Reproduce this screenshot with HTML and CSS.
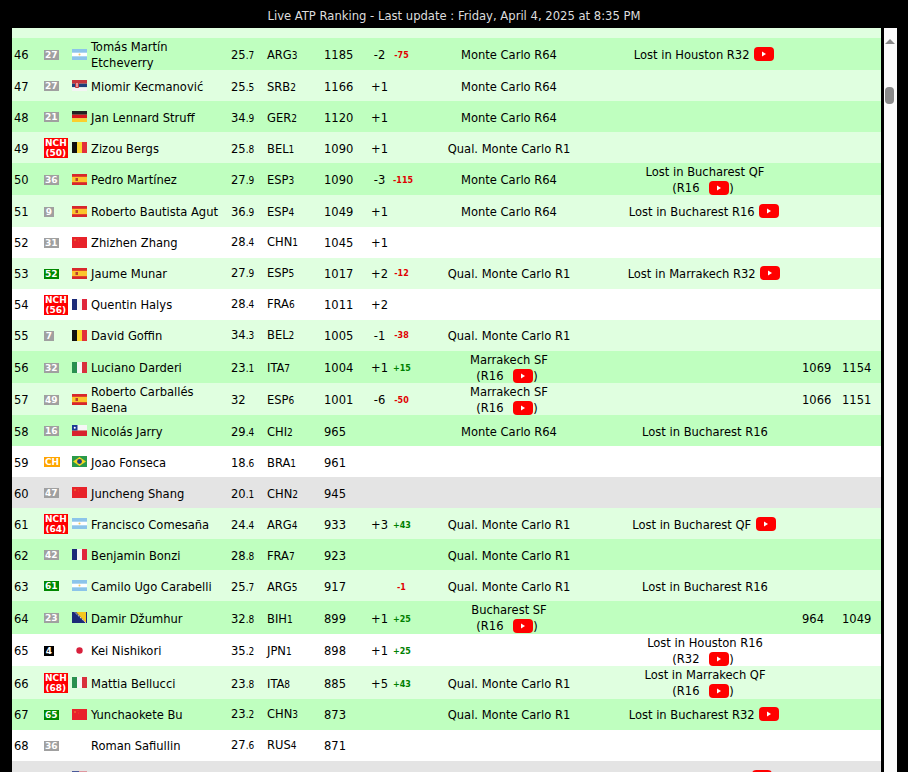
FILE: index.html
```html
<!DOCTYPE html>
<html lang="en">
<head>
<meta charset="utf-8">
<title>Live ATP Ranking</title>
<link rel="stylesheet" href="styles.css">
</head>
<body>
<svg class="defs" width="0" height="0" aria-hidden="true">
<symbol id="yt" viewBox="0 0 20 14"><rect width="20" height="14" rx="4" fill="#f00"/><path d="M8 4.5v5l4-2.5z" fill="#fff"/></symbol>
<symbol id="arg" viewBox="0 0 15 11"><rect width="15" height="11" fill="#fff"/><rect width="15" height="3.7" fill="#8cc4ea"/><rect y="7.3" width="15" height="3.7" fill="#8cc4ea"/><circle cx="7.5" cy="5.5" r="1" fill="#f0c860"/></symbol>
<symbol id="srb" viewBox="0 0 15 11"><rect width="15" height="3.7" fill="#c6363c"/><rect y="3.7" width="15" height="3.6" fill="#1f3f7a"/><rect y="7.3" width="15" height="3.7" fill="#f4f4f4"/><rect x="3" y="2" width="4" height="6" rx="1" fill="#c6363c"/><rect x="4.5" y="3" width="1" height="4" fill="#fff"/></symbol>
<symbol id="ger" viewBox="0 0 15 11"><rect width="15" height="3.7" fill="#222"/><rect y="3.7" width="15" height="3.6" fill="#d8161e"/><rect y="7.3" width="15" height="3.7" fill="#fbcf2c"/></symbol>
<symbol id="bel" viewBox="0 0 15 11"><rect width="5" height="11" fill="#111"/><rect x="5" width="5" height="11" fill="#fbd930"/><rect x="10" width="5" height="11" fill="#e2303a"/></symbol>
<symbol id="esp" viewBox="0 0 15 11"><rect width="15" height="11" fill="#d8262c"/><rect y="2.8" width="15" height="5.4" fill="#fbc52c"/><rect x="3.5" y="4" width="2.5" height="3" fill="#b8402c"/></symbol>
<symbol id="chn" viewBox="0 0 15 11"><rect width="15" height="11" fill="#e8222a"/><circle cx="3" cy="3" r="1" fill="#ee6a30"/><circle cx="6" cy="1.5" r=".4" fill="#ee6a30"/><circle cx="6.5" cy="4" r=".4" fill="#ee6a30"/></symbol>
<symbol id="fra" viewBox="0 0 15 11"><rect width="5" height="11" fill="#1c2a78"/><rect x="5" width="5" height="11" fill="#f6f6f6"/><rect x="10" width="5" height="11" fill="#e0263c"/></symbol>
<symbol id="ita" viewBox="0 0 15 11"><rect width="5" height="11" fill="#2a9050"/><rect x="5" width="5" height="11" fill="#f6f6f6"/><rect x="10" width="5" height="11" fill="#d8303c"/></symbol>
<symbol id="chi" viewBox="0 0 15 11"><rect width="15" height="5.5" fill="#f6f6f6"/><rect y="5.5" width="15" height="5.5" fill="#d8222c"/><rect width="5.5" height="5.5" fill="#1c3a94"/><circle cx="2.75" cy="2.75" r="1" fill="#fff"/></symbol>
<symbol id="bra" viewBox="0 0 15 11"><rect width="15" height="11" fill="#2a9a4a"/><path d="M7.5 1 14 5.5 7.5 10 1 5.5z" fill="#f4d820"/><circle cx="7.5" cy="5.5" r="2.4" fill="#203c80"/></symbol>
<symbol id="bih" viewBox="0 0 15 11"><rect width="15" height="11" fill="#1c2a78"/><path d="M4 0h10v11z" fill="#f4c820"/><path d="M2.5 0 14 11" stroke="#f4f4f4" stroke-width="1" stroke-dasharray="1.5 1"/></symbol>
<symbol id="jpn" viewBox="0 0 15 11"><circle cx="7.5" cy="5.5" r="3.2" fill="#d8203c"/></symbol>
<symbol id="usa" viewBox="0 0 15 11"><rect width="15" height="11" fill="#f0f0f0"/><path d="M0 1h15M0 3.5h15M0 6h15M0 8.5h15" stroke="#d04050" stroke-width="1.2"/><rect width="7" height="6" fill="#4a5a9a"/></symbol>
</svg>
<header class="top">Live ATP Ranking - Last update : Friday, April 4, 2025 at 8:35 PM</header>
<div class="frame">
  <main class="scroller">
    <table class="rank">
      <colgroup>
        <col class="c-rank"><col class="c-badge"><col class="c-flag"><col class="c-name"><col class="c-age"><col class="c-ctry"><col class="c-pts"><col class="c-chg"><col class="c-delta"><col class="c-next"><col class="c-last"><col class="c-l1"><col class="c-l2">
      </colgroup>
      <tbody>
        <tr class="spacer light"><td colspan="13"></td></tr>
        <tr class="med h32 lo"><td class="pl">46</td><td class="pl"><span class="bd gray">27</span></td><td class="pl"><svg class="flag"><use href="#arg"/></svg></td><td class="pl two"><div class="shift">Tomás Martín Etcheverry</div></td><td class="pl">25<small>.7</small></td><td class="pl">ARG<small>3</small></td><td class="pl">1185</td><td class="ct">-2</td><td class="ct"><span class="dn">-75</span></td><td class="ct">Monte Carlo R64</td><td class="ct">Lost in Houston R32 <svg class="yt"><use href="#yt"/></svg></td><td></td><td></td></tr>
        <tr class="light lo"><td class="pl">47</td><td class="pl"><span class="bd gray">27</span></td><td class="pl"><svg class="flag"><use href="#srb"/></svg></td><td class="pl">Miomir Kecmanović</td><td class="pl">25<small>.5</small></td><td class="pl">SRB<small>2</small></td><td class="pl">1166</td><td class="ct">+1</td><td class="ct"></td><td class="ct">Monte Carlo R64</td><td></td><td></td><td></td></tr>
        <tr class="med lo"><td class="pl">48</td><td class="pl"><span class="bd gray">21</span></td><td class="pl"><svg class="flag"><use href="#ger"/></svg></td><td class="pl">Jan Lennard Struff</td><td class="pl">34<small>.9</small></td><td class="pl">GER<small>2</small></td><td class="pl">1120</td><td class="ct">+1</td><td class="ct"></td><td class="ct">Monte Carlo R64</td><td></td><td></td><td></td></tr>
        <tr class="light lo"><td class="pl">49</td><td class="pl"><span class="bd red">NCH<br>(50)</span></td><td class="pl"><svg class="flag"><use href="#bel"/></svg></td><td class="pl">Zizou Bergs</td><td class="pl">25<small>.8</small></td><td class="pl">BEL<small>1</small></td><td class="pl">1090</td><td class="ct">+1</td><td class="ct"></td><td class="ct">Qual. Monte Carlo R1</td><td></td><td></td><td></td></tr>
        <tr class="med h32 lo"><td class="pl">50</td><td class="pl"><span class="bd gray">36</span></td><td class="pl"><svg class="flag"><use href="#esp"/></svg></td><td class="pl">Pedro Martínez</td><td class="pl">27<small>.9</small></td><td class="pl">ESP<small>3</small></td><td class="pl">1090</td><td class="ct">-3</td><td class="ct"><span class="dn">-115</span></td><td class="ct">Monte Carlo R64</td><td class="ct two"><div class="shift">Lost in Bucharest QF<br>(R16 <svg class="yt"><use href="#yt"/></svg><span class="pr">)</span></div></td><td></td><td></td></tr>
        <tr class="light h32 lo"><td class="pl">51</td><td class="pl"><span class="bd gray">9</span></td><td class="pl"><svg class="flag"><use href="#esp"/></svg></td><td class="pl">Roberto Bautista Agut</td><td class="pl">36<small>.9</small></td><td class="pl">ESP<small>4</small></td><td class="pl">1049</td><td class="ct">+1</td><td class="ct"></td><td class="ct">Monte Carlo R64</td><td class="ct">Lost in Bucharest R16 <svg class="yt"><use href="#yt"/></svg></td><td></td><td></td></tr>
        <tr class="white"><td class="pl">52</td><td class="pl"><span class="bd gray">31</span></td><td class="pl"><svg class="flag"><use href="#chn"/></svg></td><td class="pl">Zhizhen Zhang</td><td class="pl">28<small>.4</small></td><td class="pl">CHN<small>1</small></td><td class="pl">1045</td><td class="ct">+1</td><td class="ct"></td><td class="ct"></td><td></td><td></td><td></td></tr>
        <tr class="light"><td class="pl">53</td><td class="pl"><span class="bd green">52</span></td><td class="pl"><svg class="flag"><use href="#esp"/></svg></td><td class="pl">Jaume Munar</td><td class="pl">27<small>.9</small></td><td class="pl">ESP<small>5</small></td><td class="pl">1017</td><td class="ct">+2</td><td class="ct"><span class="dn">-12</span></td><td class="ct">Qual. Monte Carlo R1</td><td class="ct">Lost in Marrakech R32 <svg class="yt"><use href="#yt"/></svg></td><td></td><td></td></tr>
        <tr class="white"><td class="pl">54</td><td class="pl"><span class="bd red">NCH<br>(56)</span></td><td class="pl"><svg class="flag"><use href="#fra"/></svg></td><td class="pl">Quentin Halys</td><td class="pl">28<small>.4</small></td><td class="pl">FRA<small>6</small></td><td class="pl">1011</td><td class="ct">+2</td><td class="ct"></td><td class="ct"></td><td></td><td></td><td></td></tr>
        <tr class="light"><td class="pl">55</td><td class="pl"><span class="bd gray">7</span></td><td class="pl"><svg class="flag"><use href="#bel"/></svg></td><td class="pl">David Goffin</td><td class="pl">34<small>.3</small></td><td class="pl">BEL<small>2</small></td><td class="pl">1005</td><td class="ct">-1</td><td class="ct"><span class="dn">-38</span></td><td class="ct">Qual. Monte Carlo R1</td><td></td><td></td><td></td></tr>
        <tr class="med h32 lo"><td class="pl">56</td><td class="pl"><span class="bd gray">32</span></td><td class="pl"><svg class="flag"><use href="#ita"/></svg></td><td class="pl">Luciano Darderi</td><td class="pl">23<small>.1</small></td><td class="pl">ITA<small>7</small></td><td class="pl">1004</td><td class="ct">+1</td><td class="ct"><span class="up">+15</span></td><td class="ct two"><div class="shift">Marrakech SF<br>(R16 <svg class="yt"><use href="#yt"/></svg><span class="pr">)</span></div></td><td></td><td>1069</td><td>1154</td></tr>
        <tr class="light h32 lo"><td class="pl">57</td><td class="pl"><span class="bd gray">49</span></td><td class="pl"><svg class="flag"><use href="#esp"/></svg></td><td class="pl two"><div class="shift">Roberto Carballés Baena</div></td><td class="pl">32</td><td class="pl">ESP<small>6</small></td><td class="pl">1001</td><td class="ct">-6</td><td class="ct"><span class="dn">-50</span></td><td class="ct two"><div class="shift">Marrakech SF<br>(R16 <svg class="yt"><use href="#yt"/></svg><span class="pr">)</span></div></td><td></td><td>1066</td><td>1151</td></tr>
        <tr class="med lo"><td class="pl">58</td><td class="pl"><span class="bd gray">16</span></td><td class="pl"><svg class="flag"><use href="#chi"/></svg></td><td class="pl">Nicolás Jarry</td><td class="pl">29<small>.4</small></td><td class="pl">CHI<small>2</small></td><td class="pl">965</td><td class="ct"></td><td class="ct"></td><td class="ct">Monte Carlo R64</td><td class="ct">Lost in Bucharest R16</td><td></td><td></td></tr>
        <tr class="white lo"><td class="pl">59</td><td class="pl"><span class="bd orange">CH</span></td><td class="pl"><svg class="flag"><use href="#bra"/></svg></td><td class="pl">Joao Fonseca</td><td class="pl">18<small>.6</small></td><td class="pl">BRA<small>1</small></td><td class="pl">961</td><td class="ct"></td><td class="ct"></td><td class="ct"></td><td></td><td></td><td></td></tr>
        <tr class="grey lo"><td class="pl">60</td><td class="pl"><span class="bd gray">47</span></td><td class="pl"><svg class="flag"><use href="#chn"/></svg></td><td class="pl">Juncheng Shang</td><td class="pl">20<small>.1</small></td><td class="pl">CHN<small>2</small></td><td class="pl">945</td><td class="ct"></td><td class="ct"></td><td class="ct"></td><td></td><td></td><td></td></tr>
        <tr class="light lo"><td class="pl">61</td><td class="pl"><span class="bd red">NCH<br>(64)</span></td><td class="pl"><svg class="flag"><use href="#arg"/></svg></td><td class="pl">Francisco Comesaña</td><td class="pl">24<small>.4</small></td><td class="pl">ARG<small>4</small></td><td class="pl">933</td><td class="ct">+3</td><td class="ct"><span class="up">+43</span></td><td class="ct">Qual. Monte Carlo R1</td><td class="ct">Lost in Bucharest QF <svg class="yt"><use href="#yt"/></svg></td><td></td><td></td></tr>
        <tr class="med lo"><td class="pl">62</td><td class="pl"><span class="bd gray">42</span></td><td class="pl"><svg class="flag"><use href="#fra"/></svg></td><td class="pl">Benjamin Bonzi</td><td class="pl">28<small>.8</small></td><td class="pl">FRA<small>7</small></td><td class="pl">923</td><td class="ct"></td><td class="ct"></td><td class="ct">Qual. Monte Carlo R1</td><td></td><td></td><td></td></tr>
        <tr class="light lo"><td class="pl">63</td><td class="pl"><span class="bd green">61</span></td><td class="pl"><svg class="flag"><use href="#arg"/></svg></td><td class="pl">Camilo Ugo Carabelli</td><td class="pl">25<small>.7</small></td><td class="pl">ARG<small>5</small></td><td class="pl">917</td><td class="ct"></td><td class="ct"><span class="dn">-1</span></td><td class="ct">Qual. Monte Carlo R1</td><td class="ct">Lost in Bucharest R16</td><td></td><td></td></tr>
        <tr class="med h33 lo2"><td class="pl">64</td><td class="pl"><span class="bd gray">23</span></td><td class="pl"><svg class="flag"><use href="#bih"/></svg></td><td class="pl">Damir Džumhur</td><td class="pl">32<small>.8</small></td><td class="pl">BIH<small>1</small></td><td class="pl">899</td><td class="ct">+1</td><td class="ct"><span class="up">+25</span></td><td class="ct two"><div class="shift">Bucharest SF<br>(R16 <svg class="yt"><use href="#yt"/></svg><span class="pr">)</span></div></td><td></td><td>964</td><td>1049</td></tr>
        <tr class="white h32 lo"><td class="pl">65</td><td class="pl"><span class="bd black">4</span></td><td class="pl"><svg class="flag"><use href="#jpn"/></svg></td><td class="pl">Kei Nishikori</td><td class="pl">35<small>.2</small></td><td class="pl">JPN<small>1</small></td><td class="pl">898</td><td class="ct">+1</td><td class="ct"><span class="up">+25</span></td><td class="ct"></td><td class="ct two"><div class="shift">Lost in Houston R16<br>(R32 <svg class="yt"><use href="#yt"/></svg><span class="pr">)</span></div></td><td></td><td></td></tr>
        <tr class="light h33 lo2"><td class="pl">66</td><td class="pl"><span class="bd red">NCH<br>(68)</span></td><td class="pl"><svg class="flag"><use href="#ita"/></svg></td><td class="pl">Mattia Bellucci</td><td class="pl">23<small>.8</small></td><td class="pl">ITA<small>8</small></td><td class="pl">885</td><td class="ct">+5</td><td class="ct"><span class="up">+43</span></td><td class="ct">Qual. Monte Carlo R1</td><td class="ct two"><div class="shift">Lost in Marrakech QF<br>(R16 <svg class="yt"><use href="#yt"/></svg><span class="pr">)</span></div></td><td></td><td></td></tr>
        <tr class="med"><td class="pl">67</td><td class="pl"><span class="bd green">65</span></td><td class="pl"><svg class="flag"><use href="#chn"/></svg></td><td class="pl">Yunchaokete Bu</td><td class="pl">23<small>.2</small></td><td class="pl">CHN<small>3</small></td><td class="pl">873</td><td class="ct"></td><td class="ct"></td><td class="ct">Qual. Monte Carlo R1</td><td class="ct">Lost in Bucharest R32 <svg class="yt"><use href="#yt"/></svg></td><td></td><td></td></tr>
        <tr class="white"><td class="pl">68</td><td class="pl"><span class="bd gray">36</span></td><td class="pl"></td><td class="pl">Roman Safiullin</td><td class="pl">27<small>.6</small></td><td class="pl">RUS<small>4</small></td><td class="pl">871</td><td class="ct"></td><td class="ct"></td><td class="ct"></td><td></td><td></td><td></td></tr>
        <tr class="grey"><td class="pl"></td><td class="pl"><span class="bd green empty"></span></td><td class="pl"><svg class="flag"><use href="#usa"/></svg></td><td class="pl"></td><td class="pl"></td><td class="pl"></td><td class="pl"></td><td class="ct"></td><td class="ct"></td><td class="ct"></td><td class="ct"><svg class="yt yt-last"><use href="#yt"/></svg></td><td></td><td></td></tr>
      </tbody>
    </table>
  </main>
  <aside class="scrollbar" aria-hidden="true"><span class="arrow"></span><span class="thumb"></span></aside>
</div>
</body>
</html>
```
FILE: styles.css
```css
html, body {
  margin: 0;
  height: 100%;
  background: #000;
  overflow: hidden;
}
body {
  font-family: "DejaVu Sans Condensed", "DejaVu Sans", sans-serif;
  font-size: 12.8px;
  line-height: 16px;
  color: #000;
}
.defs { position: absolute; }
.top {
  height: 20px;
  padding-top: 8px;
  text-align: center;
  color: #ddd;
  font-size: 12.9px;
}
.frame {
  display: flex;
  height: 744px;
  padding-left: 12px;
}
.scroller {
  width: 869px;
  height: 744px;
  overflow: hidden;
  flex: none;
}
.scrollbar {
  display: flex;
  flex-direction: column;
  align-items: flex-start;
  flex: none;
  box-sizing: border-box;
  width: 13px;
  margin-left: 3px;
  padding: 11px 0 0 1px;
  background: #fbfbfb;
}
.arrow {
  width: 0;
  height: 0;
  border-left: 5px solid transparent;
  border-right: 5px solid transparent;
  border-bottom: 5px solid #8a8a8a;
}
.thumb {
  width: 9px;
  height: 17px;
  margin-top: 43px;
  border-radius: 4px;
  background: #8a8a8a;
}
.rank {
  width: 869px;
  table-layout: fixed;
  border-collapse: collapse;
}
.rank td { padding: 0; vertical-align: middle; }
.rank tr { height: 31px; }
.rank tr.h32 { height: 32px; }
.rank tr.h33 { height: 33px; }
.rank tr.spacer { height: 10px; }
.rank .lo td:nth-child(n+4),
.rank .lo2 td:nth-child(n+4) { vertical-align: top; }
.rank .lo td:nth-child(n+4) { padding-top: 9px; }
.rank .lo2 td:nth-child(n+4) { padding-top: 10px; }
.rank tr td.two:nth-child(n+4) { padding-top: 0; }
.shift { margin: 1px 0 -1px; }
.rank .lo td:nth-child(1),
.rank .lo2 td:nth-child(1) { padding-top: 2px; }
.med { background: #bfffbf; }
.light { background: #e0ffe0; }
.white { background: #fff; }
.grey { background: #e4e4e4; }
.c-rank { width: 30px; }
.c-badge { width: 28px; }
.c-flag { width: 19px; }
.c-name { width: 140px; }
.c-age { width: 36px; }
.c-ctry { width: 57px; }
.c-pts { width: 44px; }
.c-chg { width: 27px; }
.c-delta { width: 17px; }
.c-next { width: 198px; }
.c-last { width: 194px; }
.c-l1 { width: 40px; }
.c-l2 { width: 39px; }
.rank td.pl { padding-left: 2px; }
.rank td.ct { text-align: center; }
small { font-size: 10px; }
.bd {
  display: inline-block;
  min-width: 8px;
  padding: 0 1px;
  font-family: "DejaVu Sans", sans-serif;
  font-size: 9px;
  font-weight: bold;
  line-height: 10px;
  color: #fff;
  text-align: center;
  vertical-align: middle;
}
.empty { width: 13px; height: 10px; }
.gray { background: #a0a0a0; }
.red { background: #f00; }
.green { background: #080; }
.orange { background: #ffa500; }
.black { background: #000; }
.flag {
  display: block;
  width: 15px;
  height: 11px;
}
.yt {
  display: inline-block;
  width: 20px;
  height: 14px;
  margin: 0 2px 0 1px;
  vertical-align: -2px;
}
.two .yt { margin: 0 0 0 6px; vertical-align: -3px; }
.pr { margin-right: 4px; }
.yt-last { margin-left: 116px; vertical-align: -3px; }
.dn, .up {
  font-family: "DejaVu Sans", sans-serif;
  font-size: 8px;
  font-weight: bold;
  white-space: nowrap;
  vertical-align: 1px;
}
.dn { color: #e00000; }
.up { color: #008000; }
```
